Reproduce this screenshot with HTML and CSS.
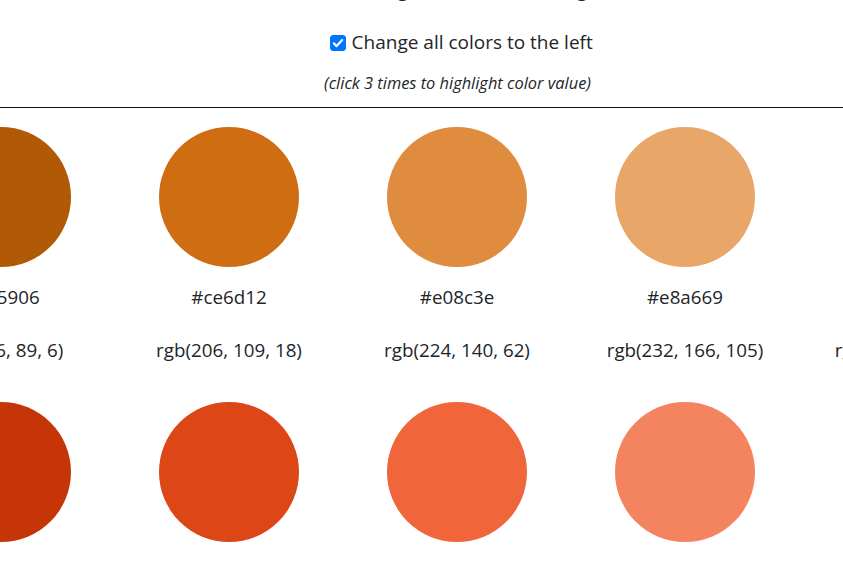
FILE: index.html
```html
<!DOCTYPE html>
<html lang="en">
<head>
<meta charset="utf-8">
<title>Color shades</title>
<link rel="stylesheet" href="styles.css">
</head>
<body>
<div class="controls">
  <div class="options">
    <label class="option first"><span class="box"></span>Change all colors to the right</label>
    <label class="option"><span class="box checked"><svg viewBox="0 0 16 16" width="16" height="16"><path d="M3.8 8.3l2.8 2.8 5.6-6" fill="none" stroke="#fff" stroke-width="2.2" stroke-linecap="round" stroke-linejoin="round"/></svg></span>Change all colors to the left</label>
  </div>
  <p class="note">(click 3 times to highlight color value)</p>
</div>
<hr class="rule">
<div class="grid">
  <div class="swatch"><div class="dot" style="background:#b05906"></div><p class="hex">#b05906</p><p class="rgb">rgb(176, 89, 6)</p></div>
  <div class="swatch"><div class="dot" style="background:#ce6d12"></div><p class="hex">#ce6d12</p><p class="rgb">rgb(206, 109, 18)</p></div>
  <div class="swatch"><div class="dot" style="background:#e08c3e"></div><p class="hex">#e08c3e</p><p class="rgb">rgb(224, 140, 62)</p></div>
  <div class="swatch"><div class="dot" style="background:#e8a669"></div><p class="hex">#e8a669</p><p class="rgb">rgb(232, 166, 105)</p></div>
  <div class="swatch"><div class="dot" style="background:#ffffff"></div><p class="hex">#ffffff</p><p class="rgb">rgb(255, 255, 255)</p></div>
  <div class="swatch"><div class="dot" style="background:#c63507"></div><p class="hex">#c63507</p><p class="rgb">rgb(198, 53, 7)</p></div>
  <div class="swatch"><div class="dot" style="background:#dd4617"></div><p class="hex">#dd4617</p><p class="rgb">rgb(221, 70, 23)</p></div>
  <div class="swatch"><div class="dot" style="background:#f06539"></div><p class="hex">#f06539</p><p class="rgb">rgb(240, 101, 57)</p></div>
  <div class="swatch"><div class="dot" style="background:#f3845f"></div><p class="hex">#f3845f</p><p class="rgb">rgb(243, 132, 95)</p></div>
  <div class="swatch"><div class="dot" style="background:#ffffff"></div><p class="hex">#ffffff</p><p class="rgb">rgb(255, 255, 255)</p></div>
</div>
</body>
</html>
```

FILE: styles.css
```css
html, body {
  margin: 0;
  padding: 0;
  background: #fff;
  overflow: hidden;
}
body {
  font-family: "Open Sans", "Noto Sans", sans-serif;
  color: #212529;
}
.controls {
  margin-top: -23px;
  padding-left: 72px;
  display: flex;
  flex-direction: column;
  align-items: center;
}
.options {
  display: flex;
  flex-direction: column;
  align-items: flex-start;
  margin-left: 20px;
}
.option {
  display: flex;
  align-items: center;
  gap: 6px;
  font-size: 19px;
  line-height: 27px;
  height: 27px;
  margin-bottom: 15px;
  white-space: nowrap;
}
.option.first {
  margin-bottom: 25px;
}
.box {
  width: 16px;
  height: 16px;
  box-sizing: border-box;
  border-radius: 3px;
  border: 1px solid #767676;
  display: flex;
  flex: none;
}
.box.checked {
  background: #0075ff;
  border-color: #0075ff;
}
.box.checked svg {
  margin: -1px;
}
.note {
  margin: 1px 0 0;
  font-size: 16.4px;
  line-height: 22px;
  font-style: italic;
}
.rule {
  margin: 13px 0 0;
  border: 0;
  border-top: 1px solid #111;
  height: 0;
}
.grid {
  display: grid;
  grid-template-columns: repeat(5, 228px);
  margin-left: -113px;
  padding-top: 19px;
}
.swatch {
  display: flex;
  flex-direction: column;
  align-items: center;
  height: 275px;
}
.dot {
  width: 140px;
  height: 140px;
  border-radius: 50%;
  flex: none;
}
.hex, .rgb {
  margin: 0;
  font-size: 18.8px;
  line-height: 24px;
  white-space: nowrap;
}
.hex {
  margin-top: 18px;
}
.rgb {
  margin-top: 29px;
}
```
